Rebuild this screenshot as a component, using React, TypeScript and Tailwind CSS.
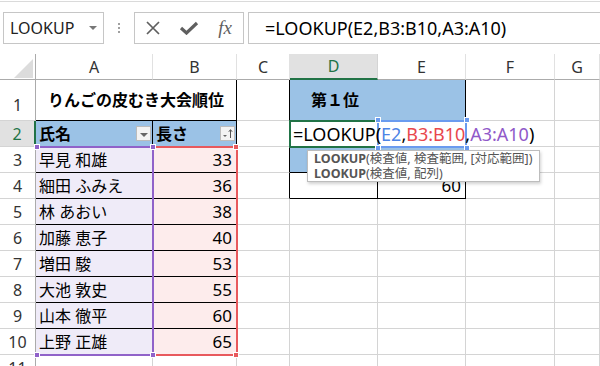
import React from 'react';

type CellProps = {
  w: string;
  r?: boolean;
  b?: boolean;
  bg?: string;
  className?: string;
  children?: React.ReactNode;
};

// one spreadsheet cell; r / b switch the right / bottom edge to a black table border
const Cell = ({ w, r, b, bg = 'bg-white', className = '', children }: CellProps) => (
  <div
    className={`${w} ${bg} shrink-0 flex items-center border-r border-b ${
      r ? 'border-r-black' : 'border-r-[#d4d4d4]'
    } ${b ? 'border-b-black' : 'border-b-[#d4d4d4]'} ${className}`}
  >
    {children}
  </div>
);

const RowHead = ({ n, sel, bottom }: { n: number; sel?: boolean; bottom?: boolean }) => (
  <div
    className={`w-[36px] shrink-0 flex justify-center border-b border-b-[#d4d4d4] text-[16px] ${
      sel
        ? 'bg-[#e1e1e1] text-[#217346] border-r-2 border-r-[#217346]'
        : 'bg-white text-[#333] border-r border-r-[#ababab]'
    } ${bottom ? 'items-end pb-[3px]' : 'items-center'}`}
  >
    {n}
  </div>
);

const ColHead = ({ w, label, sel }: { w: string; label: string; sel?: boolean }) => (
  <div
    className={`${w} shrink-0 flex items-center justify-center text-[16px] ${
      sel
        ? 'bg-[#e1e1e1] text-[#217346] border-b-2 border-b-[#217346] border-r border-r-[#d4d4d4]'
        : 'bg-white text-[#333] border-b border-b-[#ababab] border-r border-r-[#e1e1e1]'
    }`}
  >
    {label}
  </div>
);

const FilterButton = ({ sorted }: { sorted?: boolean }) => (
  <div className="ml-auto mr-[1px] w-[15px] h-[15px] border border-[#bcbcbc] bg-[#f3f3f3] flex items-end justify-center pb-[3px] relative">
    {sorted ? (
      <svg width="13" height="13" viewBox="0 0 13 13" className="absolute left-0 top-0">
        <path d="M2 8 L6 8 L4 10 Z" fill="#666" />
        <path d="M9.5 11 L9.5 3 M7.8 4.8 L9.5 2.6 L11.2 4.8" stroke="#555" strokeWidth="1" fill="none" />
      </svg>
    ) : (
      <svg width="8" height="4" viewBox="0 0 8 4">
        <path d="M0 0 L8 0 L4 4 Z" fill="#666" />
      </svg>
    )}
  </div>
);

const Handle = ({ className }: { className: string }) => (
  <div className={`absolute w-[6px] h-[6px] border border-white ${className}`} />
);

const names = ['早見 和雄', '細田 ふみえ', '林 あおい', '加藤 恵子', '増田 駿', '大池 敦史', '山本 徹平', '上野 正雄'];
const lengths = [33, 36, 38, 40, 53, 55, 60, 65];

const Formula = () => (
  <>
    =LOOKUP(<span className="text-[#4d84e6]">E2</span>,<span className="text-[#e8474d]">B3:B10</span>,
    <span className="text-[#9059c9]">A3:A10</span>)
  </>
);

export default function App() {
  return (
    <div className="w-[600px] h-[366px] overflow-hidden bg-white font-['Noto_Sans','Noto_Sans_CJK_JP',sans-serif] text-black">
      {/* formula bar */}
      <div className="h-[53px] mt-[1px] border-t border-t-[#dadada] pt-[10px] flex items-start">
        <div className="ml-[3px] w-[101px] h-[32px] border border-[#c6c6c6] flex items-center pl-[6px] pr-[6px] text-[16px] text-[#222]">
          LOOKUP
          <svg width="8" height="4" viewBox="0 0 8 4" className="ml-auto">
            <path d="M0 0 L8 0 L4 4 Z" fill="#777" />
          </svg>
        </div>
        <div className="w-[30px] h-[32px] flex flex-col items-center justify-center gap-[2px]">
          <div className="w-[2px] h-[2px] bg-[#a0a0a0]" />
          <div className="w-[2px] h-[2px] bg-[#a0a0a0]" />
          <div className="w-[2px] h-[2px] bg-[#a0a0a0]" />
        </div>
        <div className="w-[110px] h-[32px] border border-[#c6c6c6] flex items-center">
          <div className="w-[36px] flex justify-center">
            <svg width="16" height="16" viewBox="0 0 16 16">
              <path d="M2 2 L14 14 M14 2 L2 14" stroke="#5f5f5f" strokeWidth="1.7" />
            </svg>
          </div>
          <div className="w-[36px] flex justify-center">
            <svg width="20" height="14" viewBox="0 0 20 14">
              <path d="M2 7 L7.5 12 L18 2" stroke="#5f5f5f" strokeWidth="3.2" fill="none" />
            </svg>
          </div>
          <div className="w-[36px] flex justify-center font-['Liberation_Serif',serif] italic text-[19px] text-[#5f5f5f] leading-none pb-[2px]">
            fx
          </div>
        </div>
        <div className="ml-[4px] flex-1 -mr-[4px] h-[32px] border border-[#c6c6c6] flex items-center pl-[16px] text-[18px] whitespace-nowrap">
          =LOOKUP(E2,B3:B10,A3:A10)
        </div>
      </div>

      {/* sheet */}
      <div className="relative">
        <div className="flex h-[26px]">
          <div className="w-[36px] shrink-0 border-r border-r-[#ababab] border-b border-b-[#ababab] flex items-end justify-end pr-[2px] pb-[1px]">
            <svg width="19" height="19" viewBox="0 0 19 19">
              <path d="M19 0 L19 19 L0 19 Z" fill="#dcdcdc" />
            </svg>
          </div>
          <ColHead w="w-[117px]" label="A" />
          <ColHead w="w-[84px]" label="B" />
          <ColHead w="w-[53px]" label="C" />
          <ColHead w="w-[88px]" label="D" sel />
          <ColHead w="w-[88px]" label="E" />
          <ColHead w="w-[89px]" label="F" />
          <ColHead w="flex-1" label="G" />
        </div>

        {/* row 1 */}
        <div className="flex h-[41px]">
          <RowHead n={1} bottom />
          <Cell w="w-[201px]" r b className="justify-center font-bold text-[16px]">
            りんごの皮むき大会順位
          </Cell>
          <Cell w="w-[53px]" r />
          <Cell w="w-[176px]" r bg="bg-[#9bc2e6]" className="pl-[21px] font-bold text-[16px] border-b-[#9bc2e6]">
            第１位
          </Cell>
          <Cell w="w-[89px]" />
          <Cell w="flex-1" />
        </div>

        {/* row 2 */}
        <div className="flex h-[26px]">
          <RowHead n={2} sel />
          <Cell w="w-[117px]" r b bg="bg-[#9bc2e6]" className="pl-[3px] font-bold text-[16px]">
            氏名
            <FilterButton />
          </Cell>
          <Cell w="w-[84px]" r b bg="bg-[#9bc2e6]" className="pl-[3px] font-bold text-[16px]">
            長さ
            <FilterButton sorted />
          </Cell>
          <Cell w="w-[53px]" r />
          <Cell w="w-[88px]" />
          <Cell w="w-[88px]" r />
          <Cell w="w-[89px]" />
          <Cell w="flex-1" />
        </div>

        {names.map((name, i) => {
          const row = i + 3;
          return (
            <div key={row} className="flex h-[26px]">
              <RowHead n={row} />
              <Cell w="w-[117px]" r b bg="bg-[#efebf8]" className="pl-[3px] text-[16px]">
                {name}
              </Cell>
              <Cell w="w-[84px]" r b bg="bg-[#fdecec]" className="justify-end pr-[4px] text-[17px]">
                {lengths[i]}
              </Cell>
              <Cell w="w-[53px]" r={row <= 4} />
              {row === 3 && <Cell w="w-[176px]" r b bg="bg-[#9bc2e6]" />}
              {row === 4 && (
                <>
                  <Cell w="w-[88px]" r b />
                  <Cell w="w-[88px]" r b className="justify-end pr-[4px] text-[17px]">
                    60
                  </Cell>
                </>
              )}
              {row > 4 && (
                <>
                  <Cell w="w-[88px]" />
                  <Cell w="w-[88px]" />
                </>
              )}
              <Cell w="w-[89px]" />
              <Cell w="flex-1" />
            </div>
          );
        })}

        <div className="flex h-[26px]">
          <RowHead n={11} />
          <Cell w="w-[117px]" />
          <Cell w="w-[84px]" />
          <Cell w="w-[53px]" />
          <Cell w="w-[88px]" />
          <Cell w="w-[88px]" />
          <Cell w="w-[89px]" />
          <Cell w="flex-1" />
        </div>

        {/* range reference outlines */}
        <div className="absolute left-[36px] top-[92px] w-[118px] h-[210px] border-t-2 border-r-2 border-b-2 border-[#9062c9]" />
        <div className="absolute left-[152px] top-[92px] w-[86px] h-[210px] border-t-2 border-r-2 border-b-2 border-[#e8595d]" />
        <Handle className="left-[233px] top-[90px] bg-[#e8595d]" />
        <Handle className="left-[233px] top-[298px] bg-[#e8595d]" />
        <Handle className="left-[34px] top-[90px] bg-[#9062c9]" />
        <Handle className="left-[34px] top-[298px] bg-[#9062c9]" />
        <Handle className="left-[150px] top-[90px] bg-[#9062c9]" />
        <Handle className="left-[150px] top-[298px] bg-[#9062c9]" />

        {/* cell being edited */}
        <div className="absolute left-[289px] top-[66px] w-[90px] h-[28px] border-2 border-[#217346]" />
        <div className="absolute left-[377px] top-[66px] w-[90px] h-[28px] border-2 border-[#6a9bef]" />
        <Handle className="left-[375px] top-[63px] bg-[#6a9bef]" />
        <Handle className="left-[464px] top-[63px] bg-[#6a9bef]" />
        <Handle className="left-[375px] top-[91px] bg-[#6a9bef]" />
        <Handle className="left-[464px] top-[91px] bg-[#6a9bef]" />
        <div className="absolute left-[293px] top-[66px] h-[28px] flex items-center text-[18px] whitespace-nowrap">
          <Formula />
        </div>

        {/* function tooltip */}
        <div className="absolute left-[307px] top-[96px] w-[233px] h-[32px] bg-white border border-[#bdbdbd] shadow-[1px_2px_3px_rgba(0,0,0,0.18)] px-[6px] text-[12.5px] leading-[15px] text-[#555] whitespace-nowrap">
          <div>
            <span className="font-bold">LOOKUP</span>(検査値, 検査範囲, [対応範囲])
          </div>
          <div>
            <span className="font-bold">LOOKUP</span>(検査値, 配列)
          </div>
        </div>
      </div>
    </div>
  );
}
